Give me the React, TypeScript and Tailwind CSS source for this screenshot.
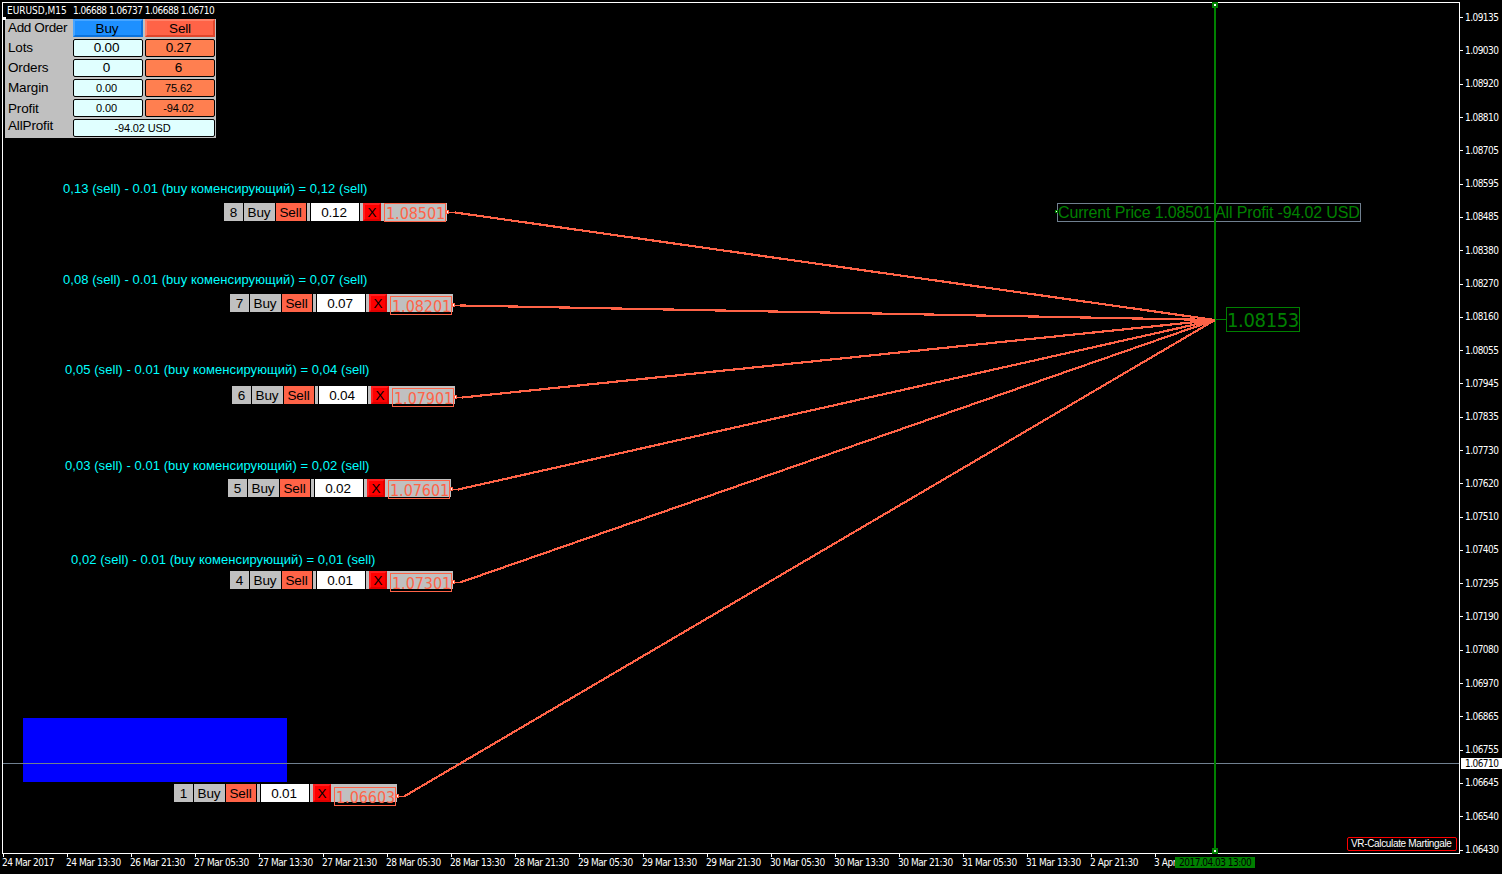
interface OrderRow {
  id: number;
  lots: string;
  price: string;
  x: number;
  y: number;
  boxY: number;
  anchorY: number;
  lineX: number;
}

const PRICES = [
  '1.09135', '1.09030', '1.08920', '1.08810', '1.08705', '1.08595', '1.08485', '1.08380', '1.08270',
  '1.08160', '1.08055', '1.07945', '1.07835', '1.07730', '1.07620', '1.07510', '1.07405', '1.07295',
  '1.07190', '1.07080', '1.06970', '1.06865', '1.06755', '1.06645', '1.06540', '1.06430',
];

const TIMES = [
  '24 Mar 2017', '24 Mar 13:30', '26 Mar 21:30', '27 Mar 05:30', '27 Mar 13:30', '27 Mar 21:30',
  '28 Mar 05:30', '28 Mar 13:30', '28 Mar 21:30', '29 Mar 05:30', '29 Mar 13:30', '29 Mar 21:30',
  '30 Mar 05:30', '30 Mar 13:30', '30 Mar 21:30', '31 Mar 05:30', '31 Mar 13:30', '2 Apr 21:30',
];

const ORDERS: OrderRow[] = [
  { id: 8, lots: '0.12', price: '1.08501', x: 224, y: 203, boxY: 203, anchorY: 212, lineX: 456 },
  { id: 7, lots: '0.07', price: '1.08201', x: 230, y: 294, boxY: 296, anchorY: 305, lineX: 461 },
  { id: 6, lots: '0.04', price: '1.07901', x: 232, y: 386, boxY: 388, anchorY: 397, lineX: 463 },
  { id: 5, lots: '0.02', price: '1.07601', x: 228, y: 479, boxY: 480, anchorY: 489, lineX: 459 },
  { id: 4, lots: '0.01', price: '1.07301', x: 230, y: 571, boxY: 573, anchorY: 582, lineX: 461 },
  { id: 1, lots: '0.01', price: '1.06603', x: 174, y: 784, boxY: 787, anchorY: 796, lineX: 405 },
];

const NOTES = [
  { text: '0,13 (sell) - 0.01 (buy коменсирующий) = 0,12 (sell)', x: 63, y: 180 },
  { text: '0,08 (sell) - 0.01 (buy коменсирующий) = 0,07 (sell)', x: 63, y: 271 },
  { text: '0,05 (sell) - 0.01 (buy коменсирующий) = 0,04 (sell)', x: 65, y: 361 },
  { text: '0,03 (sell) - 0.01 (buy коменсирующий) = 0,02 (sell)', x: 65, y: 457 },
  { text: '0,02 (sell) - 0.01 (buy коменсирующий) = 0,01 (sell)', x: 71, y: 551 },
];

const BIG = 'text-[13.5px] tracking-[-0.2px] pr-[3px]';
const SMALL = 'text-[11px] tracking-[-0.15px] pr-[3px]';

const STATS = [
  { label: 'Lots', buy: '0.00', sell: '0.27', size: BIG, leading: 'leading-[18px]' },
  { label: 'Orders', buy: '0', sell: '6', size: BIG, leading: 'leading-[18px]' },
  { label: 'Margin', buy: '0.00', sell: '75.62', size: SMALL, leading: 'leading-[17px]' },
  { label: 'Profit', buy: '0.00', sell: '-94.02', size: SMALL, leading: 'leading-[20px]' },
];

const tahoma = "font-['DejaVu_Sans_Condensed','DejaVu_Sans',sans-serif]";

function StatsPanel() {
  const cell = 'h-[18px] rounded-[2px] border border-black flex items-center justify-center';
  return (
    <div className="absolute left-[5px] top-[19px] w-[211px] h-[119px] bg-[#c0c0c0] text-black text-[13.5px] tracking-[-0.15px] leading-none">
      <div className="grid grid-cols-[66px_70px_70px] auto-rows-[18px] gap-[2px]">
        <span className="pl-[3px] leading-[18px] whitespace-nowrap tracking-[-0.35px]">Add Order</span>
        <button className="h-[18px] bg-[#1e90ff] border-2 border-t-[#48a5ff] border-l-[#48a5ff] border-r-[#0a72dd] border-b-[#0a72dd] leading-[15px] pr-[2px]">Buy</button>
        <button className="h-[18px] bg-[#ff6347] border-2 border-t-[#ff8269] border-l-[#ff8269] border-r-[#e0452b] border-b-[#e0452b] leading-[15px]">Sell</button>
        {STATS.map((s) => (
          <div key={s.label} className="contents">
            <span className={`pl-[3px] ${s.leading}`}>{s.label}</span>
            <span className={`${cell} ${s.size} bg-[#e0ffff]`}>{s.buy}</span>
            <span className={`${cell} ${s.size} bg-[#ff7f50]`}>{s.sell}</span>
          </div>
        ))}
        <span className="pl-[3px] leading-[14px]">AllProfit</span>
        <span className={`${cell} ${SMALL} col-span-2 bg-[#e0ffff]`}>-94.02 USD</span>
      </div>
    </div>
  );
}

function OrderStrip({ order }: { order: OrderRow }) {
  return (
    <>
      <div
        className="absolute flex h-[18px] w-[223px] text-[13.5px] tracking-[-0.1px] leading-[19px] text-black text-center"
        style={{ left: order.x, top: order.y }}
      >
        <span className="w-[19px] bg-[#c0c0c0]">{order.id}</span>
        <span className="ml-px w-[31px] bg-[#c0c0c0] pr-px">Buy</span>
        <span className="ml-px w-[30px] bg-[#ff6347] pr-px">Sell</span>
        <span className="ml-px w-[3px] bg-[#c0c0c0]" />
        <span className="ml-px w-[48px] bg-white pr-[2px] tracking-[-0.2px]">{order.lots}</span>
        <span className="ml-px w-[3px] bg-[#c0c0c0]" />
        <span className="w-[18px] bg-[#ff0000] border-2 border-t-[#ff2020] border-l-[#ff2020] border-r-[#e00000] border-b-[#e00000] leading-[15px]">
          X
        </span>
        <span className="grow bg-[#c0c0c0]" />
      </div>
      <div
        className={`absolute w-[62px] h-[19px] border border-[#ff6347] text-[#ff6347] text-[16px] leading-[19px] pl-px tracking-[-0.05px] ${tahoma}`}
        style={{ left: order.x + 160, top: order.boxY }}
      >
        {order.price}
      </div>
    </>
  );
}

export default function App() {
  return (
    <div className="relative w-[1502px] h-[874px] overflow-hidden bg-black text-white font-['Liberation_Sans',Arial,sans-serif]">
      <div className="flex h-[854px]">
        <div className="ml-[2px] mt-[2px] w-[1458px] h-[852px] border border-white" />
        <div className={`flex flex-col pt-[1px] text-[10px] tracking-[-0.55px] ${tahoma}`}>
          {PRICES.map((p) => (
            <div key={p} className="flex h-[33.3px] shrink-0 items-center">
              <span className="h-px w-[3px] bg-white" />
              <span className="ml-[2px] leading-none">{p}</span>
            </div>
          ))}
        </div>
      </div>
      <div className={`flex pl-[2px] text-[10px] tracking-[-0.45px] whitespace-nowrap ${tahoma}`}>
        {TIMES.map((t) => (
          <div key={t} className="w-[64px] shrink-0">
            <div className="ml-px h-[3px] w-px bg-white" />
            <div className="leading-[12px]">{t}</div>
          </div>
        ))}
        <div className="w-[21px] shrink-0 overflow-hidden">
          <div className="ml-px h-[3px] w-px bg-white" />
          <div className="leading-[12px]">3 Apr</div>
        </div>
      </div>

      {/* chart objects */}
      <div className="absolute left-[23px] top-[718px] w-[264px] h-[64px] bg-[#0000ff]" />
      <div className="absolute left-[3px] top-[763px] w-[1456px] h-px bg-[#708090]" />

      <div className={`absolute left-[7px] top-[5px] flex text-[10px] leading-[12px] whitespace-nowrap ${tahoma}`}>
        <span className="w-[66px]">EURUSD,M15</span>
        <span className="tracking-[-0.52px]">1.06688 1.06737 1.06688 1.06710</span>
      </div>
      <StatsPanel />
      <div className="absolute left-[3px] top-[17px] size-[3px] bg-white" />

      {NOTES.map((n) => (
        <div
          key={n.text}
          className="absolute text-[13px] leading-[17px] tracking-[0.06px] whitespace-nowrap text-[#00ffff]"
          style={{ left: n.x, top: n.y }}
        >
          {n.text}
        </div>
      ))}

      <div className="absolute left-[1057px] top-[203px] w-[304px] h-[19px] border border-[#708090] text-[16px] leading-[18px] tracking-[-0.14px] whitespace-nowrap text-[#008000]">
        Current Price 1.08501 All Profit -94.02 USD
      </div>
      <div className="absolute left-[1055px] top-[210px] size-[3px] border border-[#008000] bg-white" />

      <div className="absolute left-[1214px] top-[5px] w-[2px] h-[846px] bg-[#008000]" />
      <div className="absolute left-[1212px] top-[2px] size-[6px] border-2 border-[#008000] bg-white" />
      <div className="absolute left-[1212px] top-[848px] size-[6px] border-2 border-[#008000] bg-white" />

      {ORDERS.map((o) => (
        <OrderStrip key={o.id} order={o} />
      ))}

      <svg className="absolute left-0 top-0" width="1460" height="854" shapeRendering="crispEdges">
        {ORDERS.map((o) => (
          <g key={o.id} stroke="#ff6347" fill="none">
            <path d={`M${o.x + 224} ${o.anchorY + 0.5}H${o.lineX}`} />
            <path d={`M${o.lineX - 1} ${o.anchorY + 0.5}L1215 320`} strokeWidth="2.2" />
            <rect x={o.x + 222.5} y={o.anchorY - 1.5} width="2" height="3" fill="#fff" />
          </g>
        ))}
        <path d="M1216 319.5H1226" stroke="#008000" />
      </svg>

      <div className={`absolute left-[1226px] top-[307px] w-[74px] h-[25px] border border-[#008000] text-[20px] leading-[25px] tracking-[-0.35px] text-[#008000] ${tahoma}`}>
        1.08153
      </div>

      <div className="absolute left-[1347px] top-[837px] w-[110px] h-[14px] rounded-[2px] border border-[#ff0000] pl-[3px] text-[10px] leading-[12px] tracking-[-0.34px] whitespace-nowrap">
        VR-Calculate Martingale
      </div>
      <div className={`absolute left-[1461px] top-[758px] w-[41px] h-[11px] bg-white pl-[4px] text-[10px] leading-[11px] tracking-[-0.55px] text-black ${tahoma}`}>
        1.06710
      </div>
      <div className={`absolute left-[1175px] top-[857px] w-[80px] h-[11px] bg-[#008000] pl-[4px] text-[10px] leading-[11px] tracking-[-0.5px] whitespace-nowrap text-black ${tahoma}`}>
        2017.04.03 13:00
      </div>
    </div>
  );
}
